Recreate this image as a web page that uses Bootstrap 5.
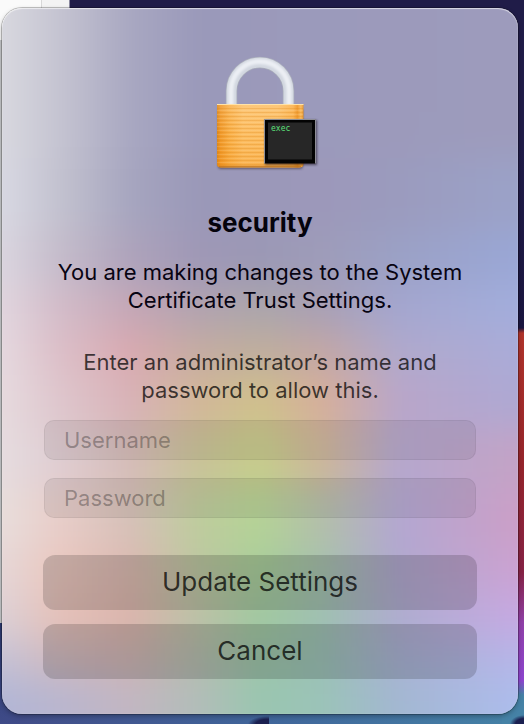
<!DOCTYPE html>
<html lang="en">
<head>
<meta charset="utf-8">
<meta name="viewport" content="width=device-width, initial-scale=1">
<title>security</title>
<link rel="stylesheet" href="https://cdn.jsdelivr.net/npm/bootstrap@5.3.0/dist/css/bootstrap.min.css">
<style>
body {
  font-family: Inter, "Liberation Sans", sans-serif;
  background:
    radial-gradient(ellipse 20px 8px at 268px 100%, #1b2050 60%, transparent) 0 0 / 269px 100% no-repeat,
    radial-gradient(ellipse 14px 9px at 100% 100%, #1b2050 60%, transparent) no-repeat,
    linear-gradient(90deg, #fafafa 41px, #d8d8d8 41px 42px, #f3f3f3 42px 69px, transparent 70px) 0 0 / 100% 40px no-repeat,
    linear-gradient(#c6c8ca 86%, #2b3870 86%, #3f4b88) 0 0 / 20px 100% no-repeat,
    linear-gradient(#201c48 0 20%, #1b1640 45.3%, #b0342b 46%, #96252c 64%, #862245 79%, #9040a8 86%, #8d45cf 94%, #4582a6 96%) 100% 0 / 22px 100% no-repeat,
    linear-gradient(90deg, #424b87, #40659a 50%, #4582a6) 0 100% / 100% 40px no-repeat,
    #201c48;
}
.stage { padding: 8px 6px 10px 2px; }
.sheet {
  border-radius: 20px;
  padding: 44px 41px 35px;
  isolation: isolate;
  box-shadow: 0 0 0 1px rgba(0, 0, 0, .22), 0 2px 5px rgba(0, 0, 0, .3);
}
.glass { position: absolute; inset: 0; z-index: -1; border-radius: 20px; }
.sheet::after {
  content: ""; position: absolute; inset: 0; border-radius: 20px; pointer-events: none;
  box-shadow: inset 0 1px 1px rgba(255, 255, 255, .6), inset 0 0 1px rgba(255, 255, 255, .5);
}
.title { font-size: 26px; line-height: 32px; font-weight: 700; color: #05030c; margin: 31px 0 19px; }
.message, .hint { font-size: 22px; line-height: 28px; }
.message { color: #080412; margin-bottom: 34px; }
.hint { color: rgba(0, 0, 0, .72); margin-bottom: 16px; }
.fields { gap: 18px; margin: 0 1px 37px; }
.fields .form-control {
  height: 40px; padding: 0 19px; font-size: 22px; line-height: 28px; border-radius: 10px;
  background: rgba(0, 0, 0, .07); border-color: rgba(0, 0, 0, .06); color: #221c26;
}
.fields .form-control::placeholder { color: rgba(0, 0, 0, .3); }
.actions { gap: 14px; }
.actions .btn {
  height: 55px; padding: 0 0 2px; font-size: 26px; line-height: 32px; border: 0; border-radius: 12px;
  background: rgba(0, 0, 0, .16); color: rgba(0, 0, 0, .74);
}
</style>
<script src="https://cdn.jsdelivr.net/npm/bootstrap@5.3.0/dist/js/bootstrap.bundle.min.js"></script>
</head>
<body>
<main class="stage min-vh-100 d-flex flex-column">
  <form class="sheet position-relative flex-grow-1 d-flex flex-column text-center">
    <svg class="glass w-100 h-100" viewBox="0 0 516 706" preserveAspectRatio="none" aria-hidden="true">
      <defs>
        <filter id="soft" filterUnits="userSpaceOnUse" x="-60" y="-80" width="636" height="866" color-interpolation-filters="sRGB"><feGaussianBlur stdDeviation="10 17"/></filter>
        <linearGradient id="span" gradientUnits="userSpaceOnUse" x1="0" y1="0" x2="516" y2="0"/>
        <linearGradient id="g1" href="#span"><stop offset="0" stop-color="#d8d8df"/><stop offset=".12" stop-color="#c3c2d0"/><stop offset=".25" stop-color="#a8a7c1"/><stop offset=".38" stop-color="#9a99ba"/><stop offset="1" stop-color="#9d9bbc"/></linearGradient>
        <linearGradient id="g2" href="#span"><stop offset="0" stop-color="#d8d8e2"/><stop offset=".12" stop-color="#c1c0ce"/><stop offset=".25" stop-color="#a6a5bf"/><stop offset=".38" stop-color="#9a98b8"/><stop offset=".62" stop-color="#9c98ba"/><stop offset=".77" stop-color="#9b9bbe"/><stop offset="1" stop-color="#9ba2c8"/></linearGradient>
        <linearGradient id="g3" href="#span"><stop offset="0" stop-color="#dad5df"/><stop offset=".11" stop-color="#c5bccb"/><stop offset=".25" stop-color="#aea3bb"/><stop offset=".38" stop-color="#9f98b6"/><stop offset=".5" stop-color="#9b98b5"/><stop offset=".62" stop-color="#9e9cb9"/><stop offset=".77" stop-color="#9ba1c6"/><stop offset="1" stop-color="#9aa7d6"/></linearGradient>
        <linearGradient id="g4" href="#span"><stop offset="0" stop-color="#e1d5de"/><stop offset=".11" stop-color="#d3bcc9"/><stop offset=".25" stop-color="#c5a7b6"/><stop offset=".38" stop-color="#b2a3b0"/><stop offset=".5" stop-color="#aca6ab"/><stop offset=".62" stop-color="#a9a0b5"/><stop offset=".77" stop-color="#a4a6cf"/><stop offset="1" stop-color="#a3aedc"/></linearGradient>
        <linearGradient id="g5" href="#span"><stop offset="0" stop-color="#e5d8df"/><stop offset=".11" stop-color="#dcbfc8"/><stop offset=".25" stop-color="#d9a9b0"/><stop offset=".38" stop-color="#c5aca2"/><stop offset=".5" stop-color="#bfae9d"/><stop offset=".62" stop-color="#c3a7a5"/><stop offset=".77" stop-color="#b0a9cc"/><stop offset="1" stop-color="#aaabd8"/></linearGradient>
        <linearGradient id="g6" href="#span"><stop offset="0" stop-color="#e6dade"/><stop offset=".11" stop-color="#dec6cd"/><stop offset=".25" stop-color="#d8b2b7"/><stop offset=".38" stop-color="#d2b799"/><stop offset=".5" stop-color="#cfc08c"/><stop offset=".62" stop-color="#d6af9b"/><stop offset=".77" stop-color="#b9a6c9"/><stop offset="1" stop-color="#aea8d3"/></linearGradient>
        <linearGradient id="g7" href="#span"><stop offset="0" stop-color="#e6dcdf"/><stop offset=".11" stop-color="#dfcdd2"/><stop offset=".25" stop-color="#d5bcb8"/><stop offset=".38" stop-color="#c9c298"/><stop offset=".5" stop-color="#c6cc8b"/><stop offset=".62" stop-color="#cdb69a"/><stop offset=".77" stop-color="#b5a7cd"/><stop offset="1" stop-color="#c3a3c6"/></linearGradient>
        <linearGradient id="g8" href="#span"><stop offset="0" stop-color="#e8dddb"/><stop offset=".11" stop-color="#e8cdc9"/><stop offset=".25" stop-color="#d6c0b8"/><stop offset=".38" stop-color="#becc9d"/><stop offset=".5" stop-color="#b4d296"/><stop offset=".62" stop-color="#b3bfaa"/><stop offset=".77" stop-color="#b3a7d1"/><stop offset="1" stop-color="#cb9fc7"/></linearGradient>
        <linearGradient id="g9" href="#span"><stop offset="0" stop-color="#e6d6d6"/><stop offset=".11" stop-color="#eac7be"/><stop offset=".25" stop-color="#dcb9b1"/><stop offset=".38" stop-color="#bdc7a2"/><stop offset=".5" stop-color="#a8ce9b"/><stop offset=".62" stop-color="#a5c2ae"/><stop offset=".77" stop-color="#b1a8cf"/><stop offset="1" stop-color="#cba2d2"/></linearGradient>
        <linearGradient id="g10" href="#span"><stop offset="0" stop-color="#ddd0d5"/><stop offset=".11" stop-color="#e5c1b9"/><stop offset=".25" stop-color="#dbb5ac"/><stop offset=".38" stop-color="#bcc1a6"/><stop offset=".5" stop-color="#a1c8a0"/><stop offset=".62" stop-color="#9fc0b1"/><stop offset=".77" stop-color="#afaccf"/><stop offset="1" stop-color="#c6a9e2"/></linearGradient>
        <linearGradient id="g11" href="#span"><stop offset="0" stop-color="#c6c2d5"/><stop offset=".11" stop-color="#d1babf"/><stop offset=".25" stop-color="#ceb3b2"/><stop offset=".38" stop-color="#b4bcad"/><stop offset=".5" stop-color="#9cc5a8"/><stop offset=".62" stop-color="#9bc0b5"/><stop offset=".77" stop-color="#a9b1d3"/><stop offset="1" stop-color="#b6b5e8"/></linearGradient>
        <linearGradient id="g12" href="#span"><stop offset="0" stop-color="#b2b6d5"/><stop offset=".11" stop-color="#b9b6cf"/><stop offset=".25" stop-color="#c2b6c2"/><stop offset=".38" stop-color="#b2bdb9"/><stop offset=".5" stop-color="#9ac6b0"/><stop offset=".62" stop-color="#9bc3b8"/><stop offset=".77" stop-color="#a3b7d2"/><stop offset="1" stop-color="#adbcec"/></linearGradient>
      </defs>
      <g filter="url(#soft)">
        <rect x="-60" y="-80" width="636" height="230" fill="url(#g1)"/>
        <rect x="-60" y="150" width="636" height="73" fill="url(#g2)"/>
        <rect x="-60" y="223" width="636" height="54" fill="url(#g3)"/>
        <rect x="-60" y="277" width="636" height="45" fill="url(#g4)"/>
        <rect x="-60" y="322" width="636" height="45" fill="url(#g5)"/>
        <rect x="-60" y="367" width="636" height="53" fill="url(#g6)"/>
        <rect x="-60" y="420" width="636" height="60" fill="url(#g7)"/>
        <rect x="-60" y="480" width="636" height="60" fill="url(#g8)"/>
        <rect x="-60" y="540" width="636" height="45" fill="url(#g9)"/>
        <rect x="-60" y="585" width="636" height="45" fill="url(#g10)"/>
        <rect x="-60" y="630" width="636" height="40" fill="url(#g11)"/>
        <rect x="-60" y="670" width="636" height="120" fill="url(#g12)"/>
      </g>
    </svg>

    <svg class="align-self-center flex-shrink-0" width="120" height="124" viewBox="0 0 120 124" role="img" aria-label="Padlock with exec badge">
      <defs>
        <linearGradient id="brass">
          <stop offset="0" stop-color="#d98418"/><stop offset=".04" stop-color="#f0982a"/><stop offset=".14" stop-color="#f9b04a"/>
          <stop offset=".3" stop-color="#fdc16a"/><stop offset=".7" stop-color="#fdc068"/><stop offset=".88" stop-color="#fbb04a"/>
          <stop offset=".93" stop-color="#ee9220"/><stop offset=".97" stop-color="#f9b552"/><stop offset="1" stop-color="#e08c20"/>
        </linearGradient>
        <linearGradient id="shade" x2="0" y2="1"><stop offset="0" stop-color="#fff" stop-opacity=".12"/><stop offset=".5" stop-color="#f59a1c" stop-opacity=".1"/><stop offset="1" stop-color="#f08c10" stop-opacity=".3"/></linearGradient>
        <pattern id="brushed" width="90" height="4" patternUnits="userSpaceOnUse"><rect width="90" height="1" fill="#d88414" opacity=".26"/><rect y="2" width="90" height="1" fill="#fff0c0" opacity=".16"/></pattern>
        <filter id="blur1" x="-10%" y="-10%" width="120%" height="120%"><feGaussianBlur stdDeviation="1"/></filter>
      </defs>
      <g fill="none">
        <path d="M31.500 53V39a28.500 28.500 0 0 1 57 0v14" stroke="#a9adba" stroke-width="11.500"/>
        <path d="M31.500 53V39a28.500 28.500 0 0 1 57 0v14" stroke="#d2d7e0" stroke-width="10"/>
        <path d="M31 53V38.500a29 29 0 0 1 58 0V53" stroke="#eceff4" stroke-width="5" filter="url(#blur1)"/>
      </g>
      <rect x="18" y="56" width="85" height="61" rx="3" fill="#3c3040" opacity=".6" filter="url(#blur1)"/>
      <path d="M17 52H103.500V112Q103.500 115.500 99 115.500H21Q17 115.500 17 112Z" fill="url(#brass)"/>
      <path d="M17 52H103.500V112Q103.500 115.500 99 115.500H21Q17 115.500 17 112Z" fill="url(#shade)"/>
      <rect x="17" y="55" width="86" height="58" fill="url(#brushed)"/>
      <path d="M17 52.500H103.500" stroke="#ffe2a8"/>
      <path d="M19 114.500H101" stroke="#bd7420" stroke-width="1.500" opacity=".75"/>
      <rect x="65" y="68" width="52" height="45" fill="#1c1424" opacity=".6" filter="url(#blur1)"/>
      <rect x="64.500" y="67.500" width="51" height="44" fill="#030303"/>
      <path d="M64.500 111.500V67.500H115.500V111.500" fill="none" stroke="#8e8e96"/>
      <rect x="68" y="70.500" width="44" height="37" fill="#272727"/>
      <text x="71" y="79" font-family="'DejaVu Sans Mono', monospace" font-size="8" fill="#5ce07a">exec</text>
    </svg>

    <h1 class="title">security</h1>
    <p class="message">You are making changes to the System Certificate Trust Settings.</p>
    <p class="hint">Enter an administrator’s name and password to allow this.</p>
    <div class="fields d-flex flex-column">
      <input class="form-control shadow-none" type="text" placeholder="Username" aria-label="Username" autocomplete="off">
      <input class="form-control shadow-none" type="password" placeholder="Password" aria-label="Password" autocomplete="off">
    </div>
    <div class="actions d-flex flex-column">
      <button class="btn w-100" type="submit">Update Settings</button>
      <button class="btn w-100" type="button">Cancel</button>
    </div>
  </form>
</main>
</body>
</html>
